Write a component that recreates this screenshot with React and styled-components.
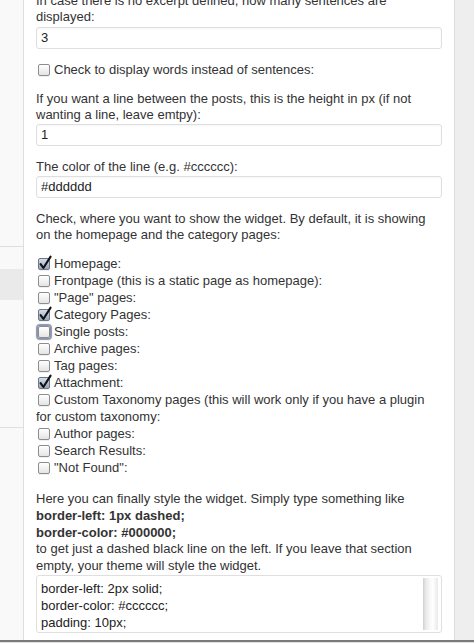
import React from 'react';
import styled, {createGlobalStyle} from 'styled-components';

const Global = createGlobalStyle`
    html, body {
        margin: 0;
        padding: 0;
        background: #f9f9f9;
    }
    body {
        font-family: "Liberation Sans", Arial, sans-serif;
        font-size: 13px;
        color: #333;
    }
`;

const Page = styled.div`
    width: 474px;
    height: 643px;
    display: flex;
    flex-direction: column;
    overflow: hidden;
`;

const Main = styled.div`
    height: 640px;
    display: flex;
`;

const Footer = styled.div`
    height: 1px;
    border-top: 2px solid #7a7a7a;
    background: #e2e2e2;
`;

const Sidebar = styled.div`
    width: 23px;
    border-right: 1px solid #dedede;
    display: flex;
    flex-direction: column;
    background: #f9f9f9;
`;

const MenuBlock = styled.div`
    height: ${p => p.h}px;
    flex: ${p => p.grow ? 1 : 'none'};
    background: ${p => p.active ? '#eaeaea' : '#f9f9f9'};
    border-bottom: ${p => p.line ? '1px solid #dfdfdf' : 'none'};
`;

const Panel = styled.div`
    width: 430px;
    background: #fff;
    overflow: hidden;
    padding: 0 12px;
    box-sizing: border-box;
`;

const Inner = styled.div`
    margin-top: -7px;
`;

const Gutter = styled.div`
    flex: 1;
    background: #eeeeee;
    border-left: 1px solid #dcdcdc;
`;

const Text = styled.p`
    margin: ${p => p.gap || 0}px 0 0;
    line-height: ${p => p.lh || 16}px;
`;

const Field = styled.div`
    margin-top: ${p => p.gap || 1}px;
    height: 22px;
    box-sizing: border-box;
    border: 1px solid #dfdfdf;
    border-radius: 3px;
    padding: 0 4px;
    line-height: 20px;
    color: #222;
    box-shadow: inset 0 1px 2px rgba(0, 0, 0, 0.04);
`;

const Row = styled.div`
    margin-top: ${p => p.gap || 0}px;
    line-height: ${p => p.lh || 17}px;
`;

const List = styled.div`
    margin-top: 12px;
`;

const Box = styled.span`
    position: relative;
    display: inline-block;
    width: 12px;
    height: 12px;
    box-sizing: border-box;
    margin: 0 4px 0 2px;
    vertical-align: -2px;
    border: 1px solid ${p => p.checked ? '#6f7785' : '#8d8d8d'};
    border-radius: 2px;
    background: ${p => p.checked
        ? 'linear-gradient(#d5dcea, #98a5be)'
        : 'linear-gradient(#ffffff, #e4e4e4)'};
    box-shadow: ${p => p.focus
        ? '0 0 1px 2px rgba(96, 114, 146, 0.75)'
        : '0 1px 0 rgba(0, 0, 0, 0.06)'};
`;

const Tick = styled.svg`
    position: absolute;
    left: 0;
    top: -3px;
    width: 13px;
    height: 14px;
    overflow: visible;
`;

const Check = ({checked, focus}) => (
    <Box checked={checked} focus={focus}>
        {checked &&
        <Tick viewBox="0 0 13 14">
            <path d="M1.6 8.2 L4.4 12 L11.6 0.6" fill="none" stroke="#111" strokeWidth="2.1"
                  strokeLinecap="round" strokeLinejoin="round"/>
        </Tick>}
    </Box>
);

const Strong = styled.b`
    font-weight: bold;
    color: #333;
`;

const CodeBox = styled.div`
    margin-top: 0;
    height: 58px;
    box-sizing: border-box;
    border: 1px solid #dfdfdf;
    border-radius: 3px;
    display: flex;
    overflow: hidden;
`;

const Code = styled.div`
    flex: 1;
    padding: 4px 4px 0;
    line-height: 17px;
    color: #222;
    overflow: hidden;
`;

const Scroll = styled.div`
    width: 15px;
    margin: 2px 3px 2px 0;
    background: linear-gradient(to right, #cfcfcf 0, #e6e6e6 15%, #f8f8f8 45%, #ffffff 65%, #e9e9e9 100%);
`;

const pages = [
    {label: 'Homepage:', checked: true},
    {label: 'Frontpage (this is a static page as homepage):'},
    {label: '"Page" pages:'},
    {label: 'Category Pages:', checked: true},
    {label: 'Single posts:', focus: true},
    {label: 'Archive pages:'},
    {label: 'Tag pages:'},
    {label: 'Attachment:', checked: true},
    {label: 'Custom Taxonomy pages (this will work only if you have a plugin for custom taxonomy:'},
    {label: 'Author pages:'},
    {label: 'Search Results:'},
    {label: '"Not Found":'},
];

const App = () => (
    <Page>
        <Global/>
        <Main>
            <Sidebar>
                <MenuBlock h={246} line/>
                <MenuBlock h={22}/>
                <MenuBlock h={31} active/>
                <MenuBlock h={127} line/>
                <MenuBlock grow/>
            </Sidebar>
            <Panel>
                <Inner>
                    <Text>In case there is no excerpt defined, how many sentences are displayed:</Text>
                    <Field gap={2}>3</Field>
                    <Row gap={13} lh={16}><Check/>Check to display words instead of sentences:</Row>
                    <Text gap={13}>If you want a line between the posts, this is the height in px (if not wanting a line, leave emtpy):</Text>
                    <Field>1</Field>
                    <Text gap={13}>The color of the line (e.g. #cccccc):</Text>
                    <Field>#dddddd</Field>
                    <Text gap={13}>Check, where you want to show the widget. By default, it is showing on the homepage and the category pages:</Text>
                    <List>
                        {pages.map(p => (
                            <Row key={p.label}>
                                <Check checked={p.checked} focus={p.focus}/>{p.label}
                            </Row>
                        ))}
                    </List>
                    <Text gap={15} lh={16.75}>
                        Here you can finally style the widget. Simply type something like<br/>
                        <Strong>border-left: 1px dashed;</Strong><br/>
                        <Strong>border-color: #000000;</Strong><br/>
                        to get just a dashed black line on the left. If you leave that section empty, your theme will style the widget.
                    </Text>
                    <CodeBox>
                        <Code>
                            border-left: 2px solid;<br/>
                            border-color: #cccccc;<br/>
                            padding: 10px;
                        </Code>
                        <Scroll/>
                    </CodeBox>
                </Inner>
            </Panel>
            <Gutter/>
        </Main>
        <Footer/>
    </Page>
);

export default App;
